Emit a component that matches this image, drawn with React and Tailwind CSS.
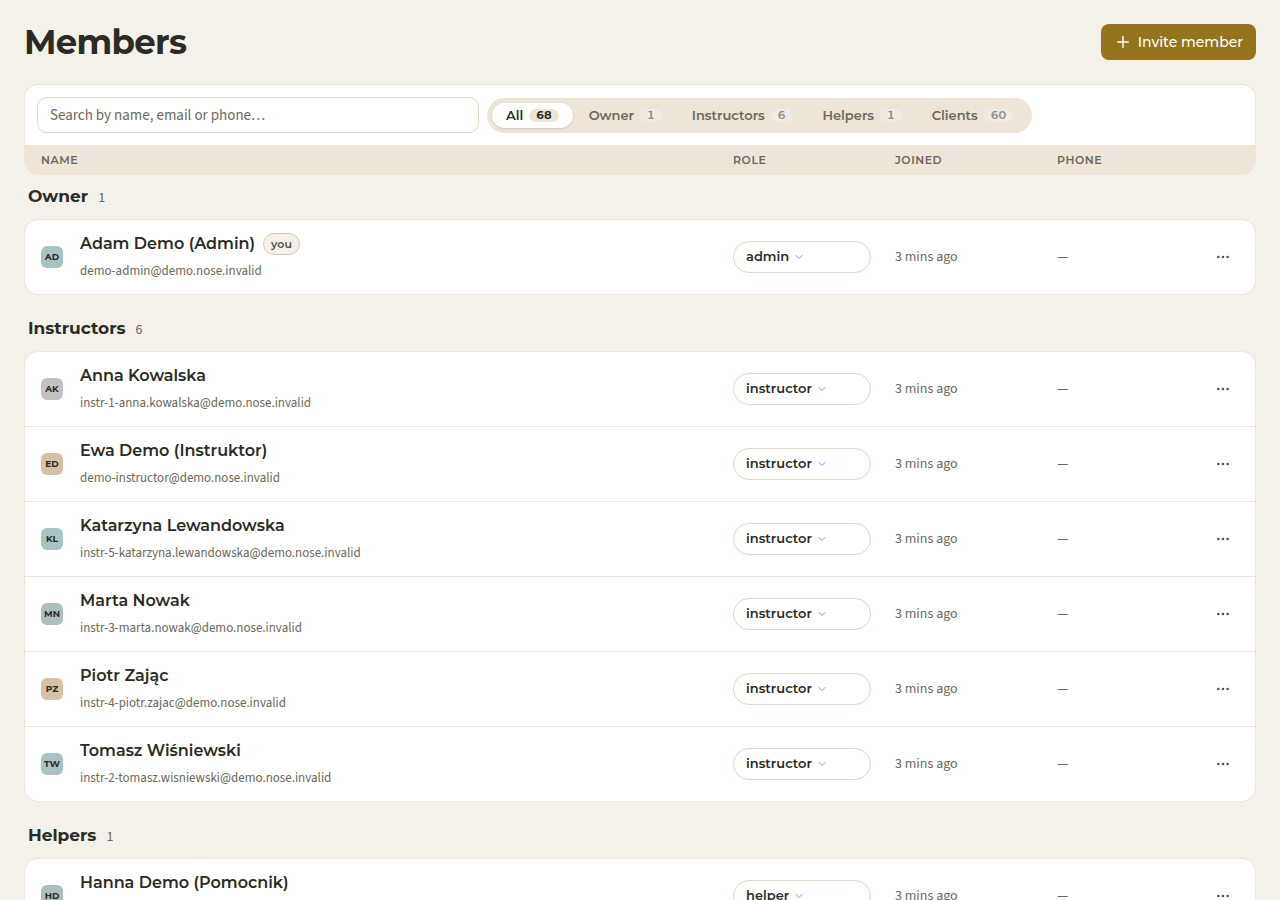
import { useState } from 'react'
import clsx from 'clsx'
import { ChevronDown, Ellipsis, Plus } from 'lucide-react'

const groups = [
  {
    title: 'Owner',
    total: 1,
    members: [
      { name: 'Adam Demo (Admin)', initials: 'AD', email: 'demo-admin@demo.nose.invalid', role: 'admin', color: 'bg-[#a9c3c5]', you: true }
    ]
  },
  {
    title: 'Instructors',
    total: 6,
    members: [
      { name: 'Anna Kowalska', initials: 'AK', email: 'instr-1-anna.kowalska@demo.nose.invalid', role: 'instructor', color: 'bg-[#c5c1c2]' },
      { name: 'Ewa Demo (Instruktor)', initials: 'ED', email: 'demo-instructor@demo.nose.invalid', role: 'instructor', color: 'bg-[#d5c1a5]' },
      { name: 'Katarzyna Lewandowska', initials: 'KL', email: 'instr-5-katarzyna.lewandowska@demo.nose.invalid', role: 'instructor', color: 'bg-[#a9c3c5]' },
      { name: 'Marta Nowak', initials: 'MN', email: 'instr-3-marta.nowak@demo.nose.invalid', role: 'instructor', color: 'bg-[#adbfbd]' },
      { name: 'Piotr Zając', initials: 'PZ', email: 'instr-4-piotr.zajac@demo.nose.invalid', role: 'instructor', color: 'bg-[#d5c1a5]' },
      { name: 'Tomasz Wiśniewski', initials: 'TW', email: 'instr-2-tomasz.wisniewski@demo.nose.invalid', role: 'instructor', color: 'bg-[#a9c3c5]' }
    ]
  },
  {
    title: 'Helpers',
    total: 1,
    members: [
      { name: 'Hanna Demo (Pomocnik)', initials: 'HD', email: 'demo-helper@demo.nose.invalid', role: 'helper', color: 'bg-[#adbfbd]' }
    ]
  }
]

const filters = [
  { label: 'All', count: 68 },
  { label: 'Owner', count: 1 },
  { label: 'Instructors', count: 6 },
  { label: 'Helpers', count: 1 },
  { label: 'Clients', count: 60 }
]

const roles = ['admin', 'instructor', 'helper', 'client']

const Columns = () => (
  <colgroup>
    <col />
    <col className="w-[162px]" />
    <col className="w-[162px]" />
    <col className="w-[150px]" />
    <col className="w-12" />
  </colgroup>
)

const FilterTabs = ({ active, onChange }) => (
  <div className="flex items-center gap-0.5 rounded-full bg-[#ede5d8] p-[5px]">
    {filters.map((f) => {
      const selected = active === f.label
      return (
        <button
          key={f.label}
          type="button"
          aria-pressed={selected}
          onClick={() => onChange(f.label)}
          className={clsx(
            'flex h-[25px] items-center gap-1.5 rounded-full px-3.5 text-[13px] leading-5 font-semibold',
            selected ? 'bg-white text-[#2b2b26] shadow-sm' : 'text-[#6b685c]'
          )}
        >
          {f.label}
          <span
            className={clsx(
              'rounded-full px-[7px] text-[11px] leading-[13px] tabular-nums',
              selected ? 'bg-[#ede5d8] font-bold' : 'bg-[#eeebe4] text-[#8d8a81]'
            )}
          >
            {f.count}
          </span>
        </button>
      )
    })}
  </div>
)

const MemberRow = ({ member }) => {
  const [role, setRole] = useState(member.role)

  return (
    <tr className="border-b border-[#ede5d8] last:border-b-0">
      <td className="py-3 pl-4">
        <div className="flex items-center gap-[17px]">
          <span className={clsx('flex size-[22px] shrink-0 items-center justify-center rounded-md text-[9px] font-bold', member.color)}>
            {member.initials}
          </span>
          <div className="flex min-w-0 flex-col gap-1">
            <div className="flex h-6 items-center gap-2">
              <p className="truncate text-[16px] leading-6 font-semibold">{member.name}</p>
              {member.you && (
                <span className="rounded-full border border-[#d8c7ab] bg-[#f4f1ea] px-[7px] text-[11px] leading-5 font-semibold text-[#57503f]">
                  you
                </span>
              )}
            </div>
            <p className="truncate font-['Source_Sans_3','Source_Sans_Pro','Noto_Sans_CJK_SC',sans-serif] text-[13px] leading-[22px] text-[#6b685c]">{member.email}</p>
          </div>
        </div>
      </td>
      <td>
        <div className="flex h-8 w-[138px] items-center gap-1 rounded-full border border-[#e0d6c4] px-3">
          <select
            aria-label={`Role of ${member.name}`}
            value={role}
            onChange={(e) => setRole(e.target.value)}
            className="appearance-none bg-transparent text-[13px] font-semibold [field-sizing:content] focus:outline-none"
          >
            {roles.map((r) => (
              <option key={r} value={r}>{r}</option>
            ))}
          </select>
          <ChevronDown className="pointer-events-none text-[#9c9a93]" size={12} />
        </div>
      </td>
      <td className="font-['Source_Sans_3','Source_Sans_Pro','Noto_Sans_CJK_SC',sans-serif] text-[14px] leading-[22px] text-[#6b685c]">3 mins ago</td>
      <td className="font-['Source_Sans_3','Source_Sans_Pro','Noto_Sans_CJK_SC',sans-serif] text-[14px] leading-[22px] text-[#6b685c]">—</td>
      <td>
        <button type="button" aria-label={`Actions for ${member.name}`} className="flex size-8 items-center justify-center rounded-md text-[#57544a]">
          <Ellipsis size={16} />
        </button>
      </td>
    </tr>
  )
}

const MemberGroup = ({ group }) => (
  <section className="mb-3">
    <div className="flex h-11 items-baseline gap-2.5 px-1 pt-[7px]">
      <h2 className="text-[17px] leading-7 font-bold">{group.title}</h2>
      <span className="font-['Source_Sans_3','Source_Sans_Pro','Noto_Sans_CJK_SC',sans-serif] text-[14px] leading-[22px] text-[#6b685c]">{group.total}</span>
    </div>
    <div className="overflow-hidden rounded-[14px] border border-[#ede5d8] bg-white">
      <table aria-label={group.title} className="w-full table-fixed border-collapse">
        <Columns />
        <tbody>
          {group.members.map((m) => (
            <MemberRow key={m.email} member={m} />
          ))}
        </tbody>
      </table>
    </div>
  </section>
)

const App = () => {
  const [search, setSearch] = useState('')
  const [filter, setFilter] = useState('All')

  const query = search.trim().toLowerCase()
  const visible = groups
    .filter((g) => filter === 'All' || g.title === filter)
    .map((g) => ({
      ...g,
      members: g.members.filter((m) => `${m.name} ${m.email}`.toLowerCase().includes(query))
    }))
    .filter((g) => g.members.length > 0)

  return (
    <main className="min-h-screen bg-[#f4f1ea] p-6 font-['Montserrat','Inter',sans-serif] text-[#2b2b26]">
      <header className="mb-6 flex items-center justify-between">
        <h1 className="text-[34px] leading-9 font-bold tracking-[-0.02em]">Members</h1>
        <button type="button" className="flex h-9 items-center gap-1.5 rounded-lg bg-[#96741e] px-[13px] text-[14px] font-medium text-white">
          <Plus size={18} strokeWidth={2} />
          Invite member
        </button>
      </header>

      <div className="overflow-hidden rounded-[14px] border border-b-0 border-[#ede5d8] bg-white">
        <div className="flex items-center gap-2 p-3">
          <input
            type="search"
            aria-label="Search members"
            value={search}
            onChange={(e) => setSearch(e.target.value)}
            placeholder="Search by name, email or phone…"
            className="h-9 w-[442px] rounded-[10px] border border-[#e0d6c4] bg-white px-3 font-['Source_Sans_3','Source_Sans_Pro','Noto_Sans_CJK_SC',sans-serif] text-[15px] leading-[22px] placeholder:text-[#6b685c] focus:outline-none"
          />
          <FilterTabs active={filter} onChange={setFilter} />
        </div>
        <table aria-label="Columns" className="w-full table-fixed bg-[#ede5d8] text-left text-[11px] tracking-wider text-[#6b685c] uppercase">
          <Columns />
          <thead>
            <tr className="h-[30px]">
              <th className="pl-4 font-semibold">Name</th>
              <th className="font-semibold">Role</th>
              <th className="font-semibold">Joined</th>
              <th className="font-semibold">Phone</th>
              <td></td>
            </tr>
          </thead>
        </table>
      </div>

      {visible.map((g) => (
        <MemberGroup key={g.title} group={g} />
      ))}
    </main>
  )
}

export default App
